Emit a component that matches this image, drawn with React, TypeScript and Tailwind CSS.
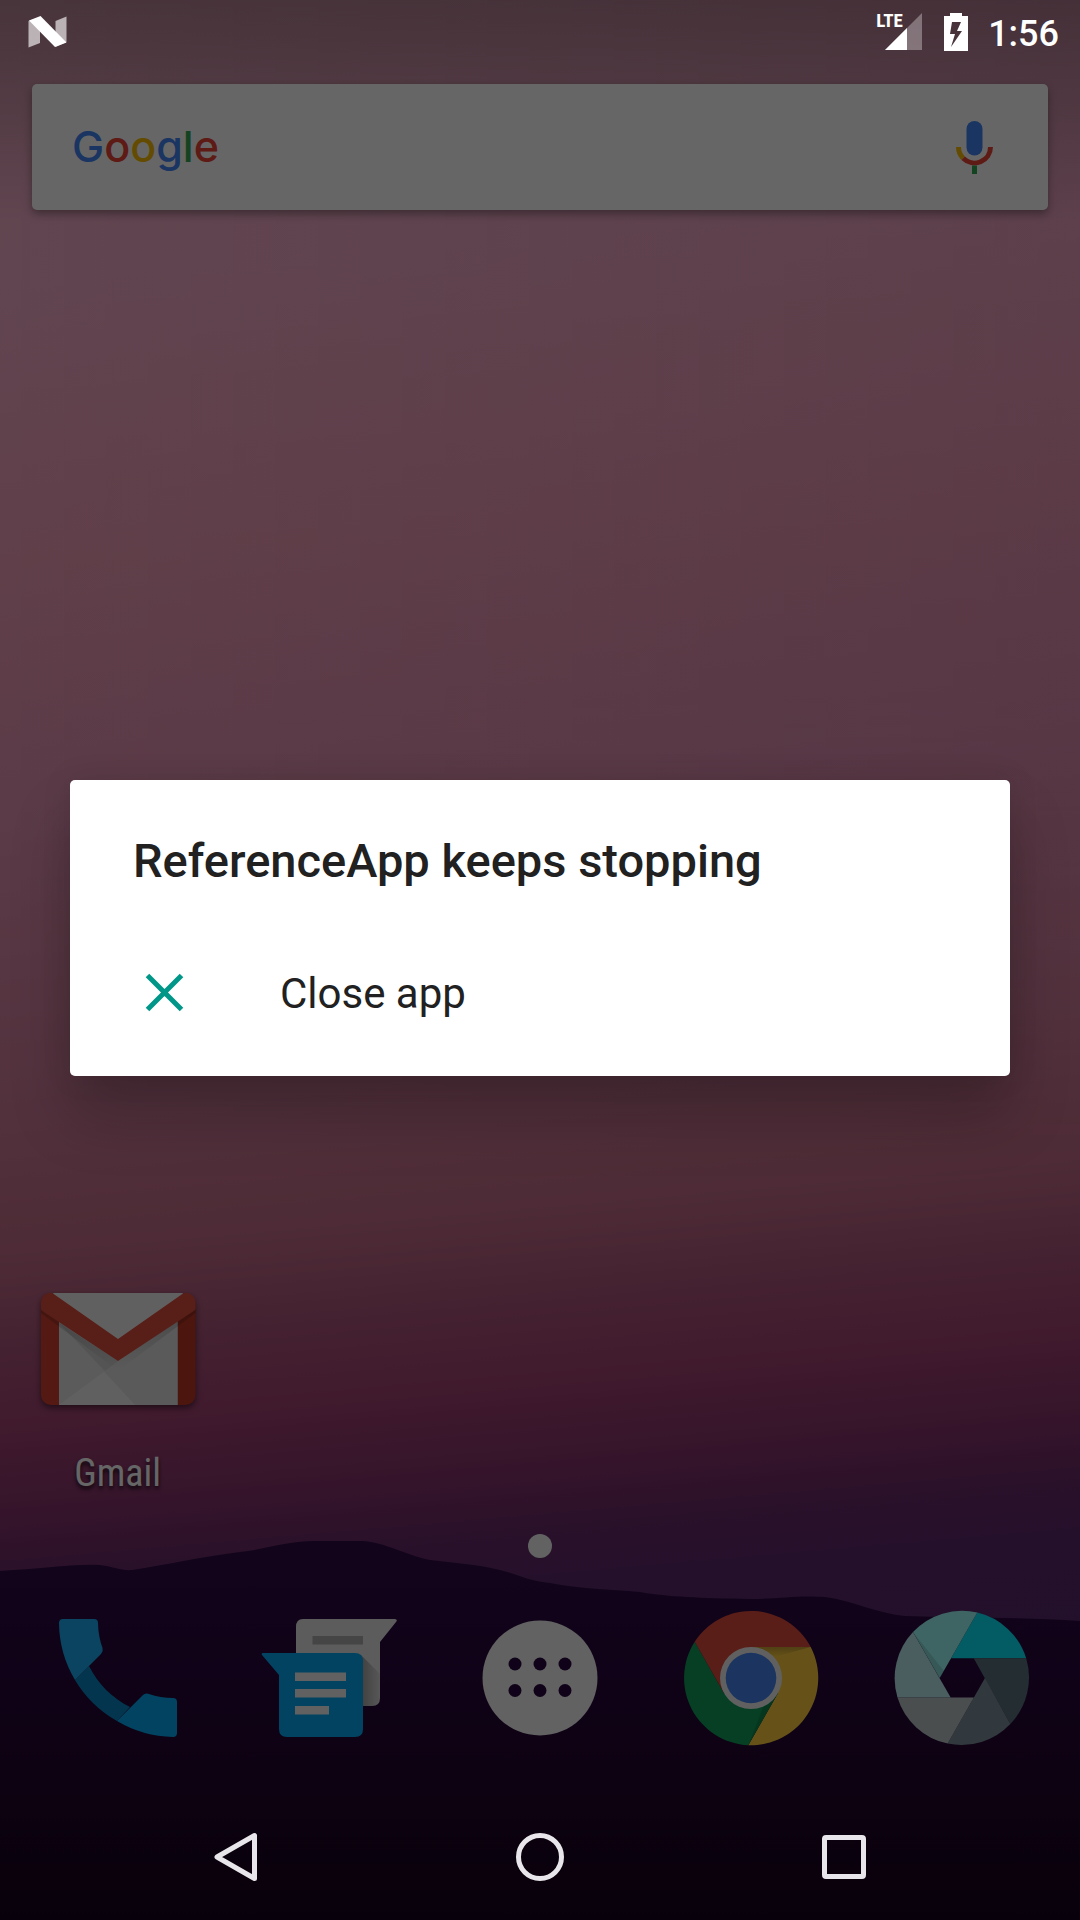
import React from "react";

function NougatIcon() {
  return (
    <svg className="h-8 w-10" viewBox="0 0 40 32" role="img" aria-label="Android Nougat">
      <path d="M0.5 5L12 1V27L0.5 31.500Z M27.500 5L38.500 0.500V26L27.500 31Z" fill="#fff" opacity="0.62" />
      <path d="M1 4.500L12.500 0L38.500 26.500L27 31Z" fill="#fff" />
    </svg>
  );
}

function StatusBar() {
  return (
    <header className="relative z-20 flex h-[63px] items-center justify-between pr-[21px] pl-7 text-white">
      <NougatIcon />
      <div className="flex items-center">
        <div className="relative mr-[22px] h-[37px] w-[46px]">
          <svg className="absolute inset-0 h-full w-full" viewBox="0 0 46 37" aria-hidden="true">
            <path d="M46 0V37H9Z" fill="#fff" opacity="0.32" />
            <path d="M31 15V37H9Z" fill="#fff" />
          </svg>
          <span className="absolute top-0 left-0 font-['Roboto_Condensed','Roboto',sans-serif] text-[19px] leading-4 font-bold">
            LTE
          </span>
        </div>
        <svg className="mr-5 h-[38px] w-6" viewBox="0 0 24 38" role="img" aria-label="Battery charging">
          <path
            fillRule="evenodd"
            fill="#fff"
            d="M6 0H18V3H24V38H0V3H6ZM8 9L6 21H11L7 34L18 18H13L17 9Z"
          />
        </svg>
        <time className="pt-1 text-[36px] leading-[44px] font-medium">1:56</time>
      </div>
    </header>
  );
}

function Wallpaper() {
  return (
    <div
      className="absolute inset-0 bg-[linear-gradient(175deg,#f3b0c8_0%,#f2adc8_14%,#f09fb8_28%,#e393b3_41%,#cf7e9b_54%,#c36d88_62%,#ab5479_67%,#a14172_71%,#86346c_75%,#6b2b69_78%,#5c286b_81%,#4c266d_100%)]"
      aria-hidden="true"
    >
      <div className="absolute inset-x-0 top-0 h-3/5 bg-linear-to-r from-transparent to-[#8a3a6a]/10 mask-b-from-60%" />
      <svg className="absolute inset-0 h-full w-full" viewBox="0 0 1080 1920" preserveAspectRatio="none">
        <defs>
          <linearGradient id="hill" x1="0" y1="0" x2="0" y2="1">
            <stop offset="0" stopColor="#2f0c45" />
            <stop offset="0.35" stopColor="#28073c" />
            <stop offset="0.7" stopColor="#1f0529" />
            <stop offset="1" stopColor="#16031c" />
          </linearGradient>
        </defs>
        <path
          fill="url(#hill)"
          d="M0 1571C40 1569 70 1564 100 1565C115 1567 122 1571 132 1570C165 1565 200 1557 240 1552C268 1549 285 1541 315 1541H362C385 1542 405 1555 430 1560C455 1563 475 1564 500 1570C520 1575 525 1580 550 1583C580 1589 610 1589 640 1592C670 1597 700 1598 750 1599C780 1599 795 1595 825 1597C855 1601 875 1613 905 1616C960 1618 1020 1617 1080 1621V1920H0Z"
        />
      </svg>
      <div className="absolute inset-x-0 top-0 h-[220px] bg-linear-to-b from-black/26 via-black/14 to-transparent" />
    </div>
  );
}

function MicIcon() {
  return (
    <svg className="h-[60px] w-12" viewBox="0 0 48 60" aria-hidden="true">
      <rect x="15.500" y="4" width="16" height="34.500" rx="8" fill="#4285f4" />
      <path d="M7.500 30A16 16 0 0 0 12.200 41.300" fill="none" stroke="#fbbc05" strokeWidth="5" />
      <path d="M12.200 41.300A16 16 0 0 0 39.500 30" fill="none" stroke="#ea4335" strokeWidth="5" />
      <path d="M21 48.500H26V57H21Z" fill="#34a853" />
    </svg>
  );
}

function SearchBar() {
  return (
    <div className="mx-8 mt-[21px] flex h-[126px] items-center justify-between rounded-[5px] bg-white pr-[49px] pl-10 shadow-[0_4px_8px_rgba(0,0,0,0.35)]">
      <button
        type="button"
        className="pb-0.5 font-['Inter',sans-serif] text-[43px] leading-[60px] font-medium"
        aria-label="Google search"
      >
        <span className="text-[#4285f4]">G</span>
        <span className="text-[#ea4335]">o</span>
        <span className="text-[#fbbc05]">o</span>
        <span className="text-[#4285f4]">g</span>
        <span className="text-[#34a853]">l</span>
        <span className="text-[#ea4335]">e</span>
      </button>
      <button type="button" aria-label="Voice search">
        <MicIcon />
      </button>
    </div>
  );
}

function GmailIcon() {
  return (
    <svg
      className="h-[120px] w-40 drop-shadow-[0_3px_3px_rgba(0,0,0,0.5)]"
      viewBox="0 0 160 120"
      aria-hidden="true"
    >
      <defs>
        <linearGradient id="flapShade" x1="0" y1="0" x2="0" y2="1">
          <stop offset="0" stopColor="#000" stopOpacity="0.2" />
          <stop offset="1" stopColor="#000" stopOpacity="0" />
        </linearGradient>
      </defs>
      <path d="M3 14H21V116H13A10 10 0 0 1 3 106Z" fill="#d0402f" />
      <path d="M139.500 14H157.500V106A10 10 0 0 1 147.500 116H139.500Z" fill="#bd3724" />
      <path d="M15 4H145L139.500 20V116H21V20Z" fill="#f1f1f1" />
      <path d="M21 34L67 82L21 116Z" fill="#e4e4e4" />
      <path d="M21 34L97 116H139.500V32L80 72Z" fill="#e2e2e2" />
      <path d="M21 34L67 82L80 72Z" fill="#d2d2d2" />
      <path d="M3 20L80 72L157.500 20V24L80 82L3 24Z" fill="url(#flapShade)" />
      <path
        d="M3 20V14Q3 7 9 4.500Q12 3 15 4.500L80 50L145 4.500Q148 3 151 4.500Q157.500 7 157.500 14V20Q157 21 155 22.500L80 72L5 22.500Q3.500 21.500 3 20Z"
        fill="#dd4b3e"
      />
    </svg>
  );
}

function PhoneIcon() {
  return (
    <svg className="h-36 w-36" viewBox="0 0 144 144" aria-hidden="true">
      <path d="M29 74L43 60C52 78 66 92 84 101L71 115A114 114 0 0 1 29 74Z" fill="#0b86c4" />
      <path
        d="M17 13H48Q52 13 52 17C52 26 54 35 56.500 42Q57.500 45 55 48L29 74A114 114 0 0 1 13 17Q13 13 17 13Z"
        fill="#1aabf0"
      />
      <path
        d="M71 115L97 89Q99.500 86.500 103 88C110 90.500 119 92 127 92Q131 92 131 96V127Q131 131 127 131A114 114 0 0 1 71 115Z"
        fill="#06a9f2"
      />
    </svg>
  );
}

function MessagesIcon() {
  return (
    <svg className="h-36 w-36" viewBox="0 0 144 144" aria-hidden="true">
      <defs>
        <linearGradient id="bubbleShade" x1="0" y1="0" x2="1" y2="0">
          <stop offset="0" stopColor="#000" stopOpacity="0.3" />
          <stop offset="1" stopColor="#000" stopOpacity="0.05" />
        </linearGradient>
      </defs>
      <path d="M46 13H138Q141 13.500 139 16L123 36V92Q123 100 115 100H39V21Q39 13 46 13Z" fill="#e6e6e6" />
      <path d="M104 49L123 68V92Q123 100 115 100H104Z" fill="url(#bubbleShade)" />
      <path d="M55.500 30H106V38.500H55.500Z" fill="#acacac" />
      <path d="M6 47H98Q106 47 106 55V123Q106 131 98 131H30Q22 131 22 123V69L5 49Q4 47 6 47Z" fill="#05a9f3" />
      <path d="M38 66.500H89V75H38ZM38 83H89V91.500H38ZM38 100H72V108.500H38Z" fill="#f2f2f2" />
    </svg>
  );
}

function AllAppsIcon() {
  return (
    <svg className="h-36 w-36" viewBox="0 0 144 144" aria-hidden="true">
      <circle cx="72" cy="72" r="57.500" fill="#f5f5f5" />
      <g fill="#28073c">
        {[58, 84.5].map((y) =>
          [47, 72, 97].map((x) => <circle key={`${x}-${y}`} cx={x} cy={y} r="6.500" />)
        )}
      </g>
    </svg>
  );
}

function ChromeIcon() {
  return (
    <svg className="h-36 w-36" viewBox="0 0 144 144" aria-hidden="true">
      <defs>
        <linearGradient id="redShade" x1="0.500" y1="0.500" x2="0" y2="0.800">
          <stop offset="0.500" stopColor="#000" stopOpacity="0" />
          <stop offset="1" stopColor="#000" stopOpacity="0.2" />
        </linearGradient>
        <linearGradient id="yellowShade" x1="0" y1="0" x2="0" y2="1">
          <stop offset="0" stopColor="#000" stopOpacity="0.22" />
          <stop offset="1" stopColor="#000" stopOpacity="0" />
        </linearGradient>
      </defs>
      <path d="M131.700 41A67.300 67.300 0 0 1 69.300 139.200L98.800 87.500L72 41Z" fill="#ffcd40" />
      <path d="M72 41H131.700L96 51Z" fill="url(#yellowShade)" />
      <path d="M69.300 139.200A67.300 67.300 0 0 1 15.700 35.700L45.200 87.500L98.800 87.500Z" fill="#109f5b" />
      <path d="M98.800 87.500L69.300 139.200L84 101Z" fill="#000" opacity="0.12" />
      <path d="M15.700 35.700A67.300 67.300 0 0 1 131.700 41H72L45.200 87.500Z" fill="#df4b3d" />
      <path d="M15.700 35.700L45.200 87.500L72 41Z" fill="url(#redShade)" />
      <circle cx="72" cy="72" r="31" fill="#f1f1f1" />
      <circle cx="72" cy="72" r="25.300" fill="#4685ef" />
    </svg>
  );
}

function CameraIcon() {
  return (
    <svg className="h-36 w-36" viewBox="0 0 144 144" aria-hidden="true">
      <path d="M87.300 6.600A67.200 67.200 0 0 1 136.200 52.300H61Z" fill="#08e3f8" />
      <path d="M136.200 52.300A67.200 67.200 0 0 1 120.300 118L83.700 52.300Z" fill="#5a727d" />
      <path d="M120.300 118A67.200 67.200 0 0 1 57.700 137.600L95 72Z" fill="#7d909b" />
      <path d="M57.700 137.600A67.200 67.200 0 0 1 7.500 91.500H83.900Z" fill="#b9c4c5" />
      <path d="M7.500 91.500A67.200 67.200 0 0 1 23 26L60.700 91.500Z" fill="#b9e9ee" />
      <path d="M23 26A67.200 67.200 0 0 1 87.300 6.600L49.700 72Z" fill="#9bfdf8" />
      <path d="M23 26L49.700 72L54 65Z" fill="#000" opacity="0.12" />
    </svg>
  );
}

const dock = [
  { name: "Phone", Icon: PhoneIcon },
  { name: "Messages", Icon: MessagesIcon },
  { name: "All apps", Icon: AllAppsIcon },
  { name: "Chrome", Icon: ChromeIcon },
  { name: "Camera", Icon: CameraIcon },
];

function HomeScreen() {
  return (
    <div className="relative flex flex-1 flex-col">
      <SearchBar />
      <div className="mt-auto grid grid-cols-5 px-3">
        <button type="button" className="flex flex-col items-center gap-11">
          <GmailIcon />
          <span className="font-['Roboto_Condensed','Roboto',sans-serif] text-[38px] leading-10 text-white [text-shadow:0_3px_4px_rgba(0,0,0,0.8)]">
            Gmail
          </span>
        </button>
      </div>
      <div className="mt-[41px] flex justify-center">
        <span className="h-6 w-6 rounded-full bg-[#f5f5f5]" />
      </div>
      <nav className="mt-12 mb-11 grid grid-cols-5 px-3" aria-label="Favorites">
        {dock.map(({ name, Icon }) => (
          <button key={name} type="button" aria-label={name} className="flex justify-center">
            <Icon />
          </button>
        ))}
      </nav>
    </div>
  );
}

function CrashDialog() {
  return (
    <div className="absolute inset-0 z-10 flex items-center bg-black/60 pt-[63px] pb-[127px]">
      <section
        role="dialog"
        aria-labelledby="crash-title"
        className="mx-[70px] flex-1 rounded-[5px] bg-white pt-[49px] pb-[21px] text-[#212121] shadow-[0_40px_60px_rgba(0,0,0,0.22),0_0_30px_rgba(0,0,0,0.1)]"
      >
        <h1 id="crash-title" className="px-[63px] text-[47px] leading-[64px] font-medium">
          ReferenceApp keeps stopping
        </h1>
        <button type="button" className="mt-9 flex h-[126px] w-full items-center gap-[84px] px-[63px] text-left">
          <svg className="h-[63px] w-[63px]" viewBox="0 0 63 63" aria-hidden="true">
            <path d="M14.500 14.500L48.500 48.500M48.500 14.500L14.500 48.500" stroke="#009688" strokeWidth="5" />
          </svg>
          <span className="pt-1 text-[42px] leading-[52px]">Close app</span>
        </button>
      </section>
    </div>
  );
}

function NavigationBar() {
  return (
    <nav className="relative z-20 flex h-[126px] px-[84px]" aria-label="System navigation">
      <button type="button" aria-label="Back" className="flex flex-1 items-center justify-center">
        <svg className="h-[52px] w-[52px]" viewBox="0 0 52 52" aria-hidden="true">
          <path d="M44.500 4.500V47.500L7 26Z" fill="none" stroke="#e8e6ea" strokeWidth="5" strokeLinejoin="round" />
        </svg>
      </button>
      <button type="button" aria-label="Home" className="flex flex-1 items-center justify-center">
        <span className="h-12 w-12 rounded-full border-[5px] border-[#e8e6ea]" />
      </button>
      <button type="button" aria-label="Overview" className="flex flex-1 items-center justify-center">
        <span className="h-11 w-11 rounded-[4px] border-[5px] border-[#e8e6ea]" />
      </button>
    </nav>
  );
}

export default function App() {
  return (
    <div className="relative flex min-h-screen flex-col overflow-hidden font-['Roboto',sans-serif]">
      <Wallpaper />
      <StatusBar />
      <HomeScreen />
      <CrashDialog />
      <NavigationBar />
    </div>
  );
}
